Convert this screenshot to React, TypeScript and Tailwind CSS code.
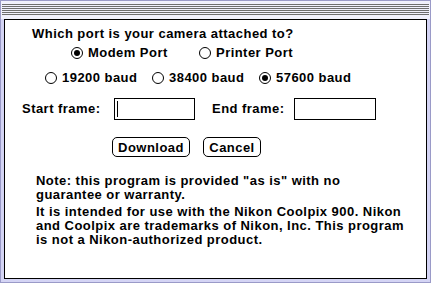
import React from "react";

function Radio({ on }: { on?: boolean }) {
  return (
    <span className="w-[12px] h-[12px] rounded-full border border-black bg-white flex items-center justify-center shrink-0">
      {on && <span className="w-[6px] h-[6px] rounded-full bg-black" />}
    </span>
  );
}

function Option({ label, on, w }: { label: string; on?: boolean; w: string }) {
  return (
    <div className={`flex items-center gap-[5px] ${w}`}>
      <Radio on={on} />
      <span>{label}</span>
    </div>
  );
}

export default function App() {
  return (
    <div
      className="w-[431px] h-[283px] bg-[#d4d4f4] border border-[#9a9ac8] flex flex-col text-black text-[13px] font-bold tracking-[0.46px] leading-[16px]"
      style={{ fontFamily: '"Liberation Sans", Arial, sans-serif' }}
    >
      {/* title bar */}
      <div className="h-[18px] bg-[#f0f0fc] px-[1px] pt-[3px] pb-[2px]">
        <div className="h-[12px] bg-[repeating-linear-gradient(to_bottom,#6e6e6e_0px,#6e6e6e_1px,#f0f0fc_1px,#f0f0fc_2px)]" />
      </div>

      {/* dialog body */}
      <div className="flex-1 mx-[3px] mb-[3px] bg-white border border-black flex flex-col pt-[6px]">
        <div className="pl-[27px] h-[16px]">Which port is your camera attached to?</div>

        <div className="flex items-center h-[16px] mt-[3px] pl-[66px]">
          <Option label="Modem Port" on w="w-[128px]" />
          <Option label="Printer Port" w="w-[120px]" />
        </div>

        <div className="flex items-center h-[16px] mt-[9px] pl-[40px]">
          <Option label="19200 baud" w="w-[107px]" />
          <Option label="38400 baud" w="w-[107px]" />
          <Option label="57600 baud" on w="w-[107px]" />
        </div>

        <div className="flex items-center h-[22px] mt-[12px] pl-[17px]">
          <span className="w-[92px]">Start frame:</span>
          <div className="w-[81px] h-[22px] border border-black flex items-center pl-[2px]">
            <span className="w-[1px] h-[16px] bg-black" />
          </div>
          <span className="w-[99px] pl-[17px]">End frame:</span>
          <div className="w-[82px] h-[22px] border border-black" />
        </div>

        <div className="flex items-center gap-[13px] mt-[17px] pl-[107px]">
          <button className="w-[78px] h-[20px] border border-black rounded-[5px] bg-white flex items-center justify-center leading-none">
            Download
          </button>
          <button className="w-[58px] h-[20px] border border-black rounded-[5px] bg-white flex items-center justify-center leading-none">
            Cancel
          </button>
        </div>

        <div className="pl-[31px] mt-[17px] leading-[14px]">
          <div>Note: this program is provided "as is" with no</div>
          <div>guarantee or warranty.</div>
          <div className="mt-[3px]">It is intended for use with the Nikon Coolpix 900. Nikon</div>
          <div>and Coolpix are trademarks of Nikon, Inc. This program</div>
          <div>is not a Nikon-authorized product.</div>
        </div>
      </div>
    </div>
  );
}
